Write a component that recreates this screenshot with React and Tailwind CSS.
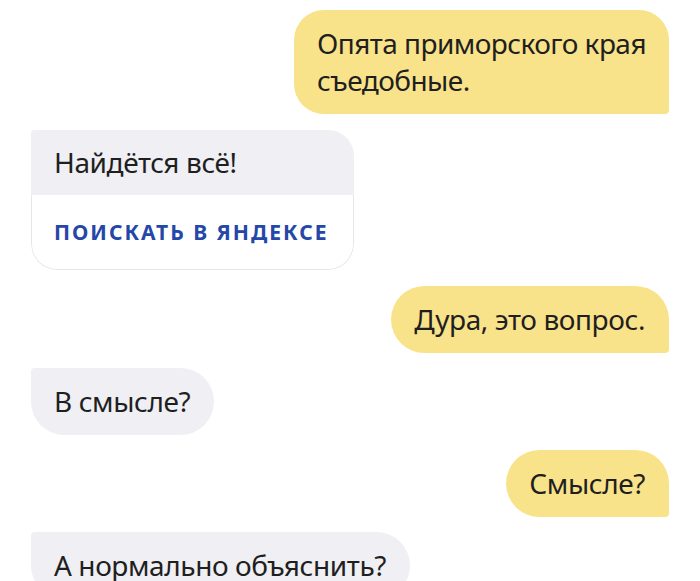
export default function App() {
  const font = { fontFamily: '"Noto Sans", "Open Sans", sans-serif' };
  return (
    <div className="w-[700px] h-[581px] overflow-hidden bg-white" style={font}>
      <div className="flex flex-col gap-[15px] pt-[10px] px-[31px] text-[#1f1f1f] text-[28px] leading-[37px] tracking-[-0.4px]">
        <div className="self-end mb-px bg-[#f9e38a] rounded-[30px] rounded-br-[4px] pl-[23px] pr-[23px] py-[15px] whitespace-nowrap tracking-[-0.55px]">
          Опята приморского края
          <br />
          съедобные.
        </div>
        <div className="self-start mb-px w-[323px] rounded-[26px] rounded-tl-[4px] overflow-hidden">
          <div className="bg-[#efeff4] h-[65px] pl-[23px] pt-[14px]">Найдётся всё!</div>
          <div className="h-[75px] border border-t-0 border-[#e6e6ea] rounded-b-[26px] flex items-center pl-[22px] text-[#2447a8] font-bold text-[21px] tracking-[2px]">
            ПОИСКАТЬ В ЯНДЕКСЕ
          </div>
        </div>
        <div className="self-end bg-[#f9e38a] rounded-[34px] rounded-br-[4px] pl-[23px] pr-[24px] py-[15px]">
          Дура, это вопрос.
        </div>
        <div className="self-start bg-[#efeff4] rounded-[34px] rounded-tl-[4px] pl-[23px] pr-[24px] py-[15px]">
          В смысле?
        </div>
        <div className="self-end bg-[#f9e38a] rounded-[34px] rounded-br-[4px] pl-[23px] pr-[24px] py-[15px]">
          Смысле?
        </div>
        <div className="self-start bg-[#efeff4] rounded-[34px] rounded-tl-[4px] pl-[23px] pr-[24px] py-[15px]">
          А нормально объяснить?
        </div>
      </div>
    </div>
  );
}
